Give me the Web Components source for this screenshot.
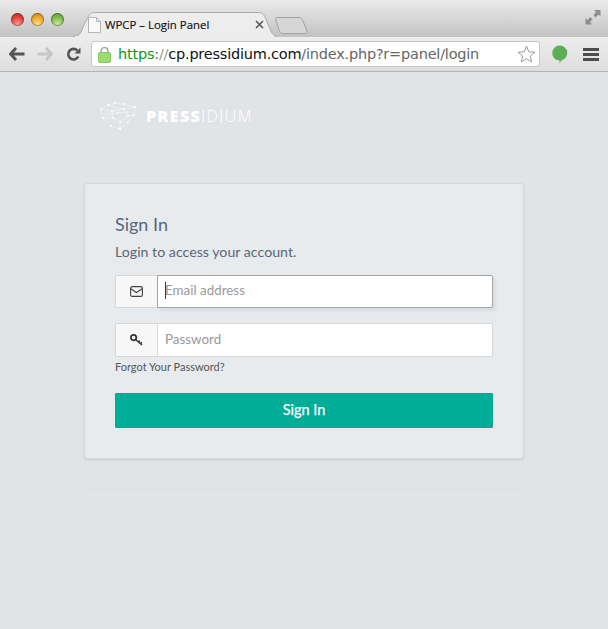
<!DOCTYPE html>
<html><head><meta charset="utf-8"><style>
html,body{margin:0;padding:0;background:#e1e4e7}
body{width:608px;height:629px;overflow:hidden}
</style></head><body>
<browser-chrome></browser-chrome>
<login-page></login-page>
<script>
function el(name,html){customElements.define(name,class extends HTMLElement{constructor(){super();this.attachShadow({mode:'open'}).innerHTML=html}})}
el('traffic-lights',`<style>:host{display:flex;gap:7px;padding:13px 0 0 11px}
i{display:block;width:13px;height:13px;border-radius:50%;box-shadow:inset 0 0 0 1px rgba(70,50,40,.45)}
.r{background:radial-gradient(circle at 50% 85%,#ff9a92,#e0403a 55%,#a82a28)}
.y{background:radial-gradient(circle at 50% 85%,#ffdf80,#eda52c 55%,#b57a20)}
.g{background:radial-gradient(circle at 50% 85%,#c6ee90,#79bb4c 55%,#55903a)}</style><i class="r"></i><i class="y"></i><i class="g"></i>`);
el('browser-tab',`<style>:host{display:block;position:relative;width:204px;height:37px;margin-left:9px;font:11.400px "Open Sans",sans-serif;color:#111;-webkit-text-stroke:.15px #111}
svg.s{position:absolute;left:0;top:0}
.c{position:relative;display:flex;align-items:center;height:25px;padding:12px 0 0 15px}
span{margin-left:4px;white-space:nowrap;width:150px}</style>
<svg class="s" width="204" height="37"><path d="M0 36.500C7 36 8 33 10 27L15 17C17 13 19 12.500 23 12.500H184C188 12.500 190 13 192 17L197 29C199 34 201 36 204 36.500" fill="#ededed" stroke="#ababab"/><path d="M2 37H202V36H2z" fill="#ededed"/></svg>
<div class="c"><svg width="13" height="16" viewBox="0 0 13 16"><path d="M.5.5H8.500L12.500 4.500V15.500H.5z" fill="#f9f9f9" stroke="#b5b5b5"/><path d="M8.500.5V4.500H12.500" fill="none" stroke="#b5b5b5"/></svg><span>WPCP – Login Panel</span><svg width="9" height="9" viewBox="0 0 9 9"><path d="M1 1L8 8M8 1L1 8" stroke="#555" stroke-width="1.500"/></svg></div>`);
el('new-tab',`<style>:host{display:block;margin:16px 0 0 -2px;height:18px}</style><svg width="34" height="19"><path d="M2 1.500H24C26 1.500 27 2 28 5L32 15C32.500 17 31 17.500 29 17.500H8C6 17.500 5 17 4 14L.8 4C.5 2 1 1.500 2 1.500z" fill="#d6d6d6" stroke="#a3a3a3"/></svg>`);
el('tool-bar',`<style>:host{display:flex;align-items:center;height:34px;padding-left:9px;background:linear-gradient(#ededed,#dedede);border-bottom:1px solid #b4b4b4}
svg{display:block;flex:none}
.url{display:flex;align-items:center;width:449px;height:26px;margin-left:10px;box-sizing:border-box;background:#fff;border:1px solid #c6c6c6;border-radius:3px;font:14.500px "DejaVu Sans",sans-serif;color:#666;white-space:nowrap;flex:none}
.url em{font-style:normal;color:#0a9a12}.url s{text-decoration:none;color:#666}.url b{font-weight:400;color:#111}
.url span{flex:1;margin-left:7px;letter-spacing:-.22px}</style>
<svg width="16" height="14" viewBox="0 0 16 14"><path d="M7 1L1.500 7L7 13M2 7H15.500" fill="none" stroke="#555" stroke-width="3"/></svg>
<svg style="margin-left:12px" width="16" height="14" viewBox="0 0 16 14"><path d="M9 1L14.500 7L9 13M14 7H.5" fill="none" stroke="#c6c6c6" stroke-width="3"/></svg>
<svg style="margin-left:13px" width="15" height="15" viewBox="0 0 15 15"><path d="M12.300 9.500A5.300 5.300 0 1 1 11.300 3.500" fill="none" stroke="#555" stroke-width="2.600"/><path d="M8.500 6.500H14.500V.5z" fill="#555"/></svg>
<div class="url"><svg style="margin-left:6px" width="13" height="17" viewBox="0 0 13 17"><path d="M3.200 7V4.800a3.300 3.300 0 0 1 6.600 0V7" fill="none" stroke="#a9a9a9" stroke-width="1.600"/><rect x=".5" y="6.500" width="12" height="10" rx="1.500" fill="#9bdc6f" stroke="#8fbf70"/></svg><span><em>https</em><s>:</s><s style="color:#999">//</s><b>cp.pressidium.com</b>/index.php?r=panel/login</span>
<svg style="margin-right:3px" width="19" height="18" viewBox="0 0 19 18"><path d="M9.500 1L11.800 6.800L18 7.200L13.200 11.100L14.800 17L9.500 13.700L4.200 17L5.800 11.100L1 7.200L7.200 6.800z" fill="#fff" stroke="#9a9a9a"/></svg></div>
<svg style="margin-left:12px" width="16" height="19" viewBox="0 0 16 19"><path d="M8 .5a7.500 7.500 0 0 1 1.500 14.800L7.500 18.500V15.500A7.500 7.500 0 0 1 8 .5z" fill="#5eae57"/></svg>
<svg style="margin-left:15px" width="16" height="13" viewBox="0 0 16 13"><path d="M0 1.500H16M0 6.500H16M0 11.500H16" stroke="#4c4c4c" stroke-width="2.800"/></svg>`);
el('browser-chrome',`<style>:host{display:block}
.top{display:flex;height:37px;background:linear-gradient(#ebebeb,#c2c2c2);overflow:hidden}
.exp{margin:9px 7px 0 auto}</style>
<div class="top"><traffic-lights></traffic-lights><browser-tab></browser-tab><new-tab></new-tab>
<svg class="exp" width="16" height="16" viewBox="0 0 16 16" fill="#8f8f8f"><path d="M9 1H15.500V7.500L13.500 5.500L10.500 8.500L8.500 6L11 3z"/><path d="M7 15.500H.5V9L2.500 11L5.500 8L7.500 10.500L5 13z"/></svg></div><tool-bar></tool-bar>`);
el('brand-logo',`<style>:host{display:flex;align-items:center;height:32px;color:#fff;font:700 16px "Open Sans",sans-serif;letter-spacing:1.400px}
svg{flex:none;margin-right:10px}span{font-weight:300}b{font-weight:800}</style>
<svg width="36" height="28" viewBox="0 0 36 28" stroke="#fff" stroke-opacity=".45" stroke-width=".8" fill="none"><path d="M1 7L8 3L15 1L24 2L35 5L34 13L28 20L20 27L11 24L3 16zM1 7L12 9L24 7L35 5M12 9L13 16L20 20L28 14L24 7M3 16L13 16M20 20V27M8 3L17 6L24 7M28 14L34 13M6 12L28 10"/><g fill="#fff" stroke="none" fill-opacity=".85"><circle cx="1" cy="7" r="1"/><circle cx="8" cy="3" r="1"/><circle cx="15" cy="1" r="1"/><circle cx="24" cy="2" r="1"/><circle cx="35" cy="5" r="1"/><circle cx="34" cy="13" r="1"/><circle cx="28" cy="20" r="1"/><circle cx="20" cy="27" r="1.200"/><circle cx="11" cy="24" r="1"/><circle cx="3" cy="16" r="1"/><circle cx="12" cy="9" r="1"/><circle cx="24" cy="7" r="1"/><circle cx="13" cy="16" r="1"/><circle cx="20" cy="20" r="1"/><circle cx="28" cy="14" r="1"/><circle cx="18" cy="11" r="1"/></g></svg><b>PRESS</b><span>IDIUM</span>`);
el('input-group',`<style>:host{display:flex;height:34px;box-sizing:border-box;font:13.400px Lato,sans-serif}
.ic{display:flex;align-items:center;justify-content:center;flex:none;width:42px;box-sizing:border-box;background:#f7f7f7;border:1px solid #d6d6d6;border-right:0;border-radius:2px 0 0 2px}
.f{flex:1;display:flex;align-items:center;padding:0 0 3px 7px;background:#fff;border:1px solid #d6d6d6;border-radius:0 2px 2px 0;color:#9a9a9a}
:host([focus]){height:33px}
:host([focus]) .f{border-color:#a3a3a3;box-shadow:3px 3px 3px rgba(0,0,0,.06)}
:host([focus]) .f::before{content:"";width:1px;height:17px;background:#333;margin-right:-1px}</style>
<div class="ic"><slot></slot></div><div class="f"><slot name="ph"></slot></div>`);
el('login-card',`<style>:host{display:block;box-sizing:border-box;width:440px;height:276px;padding:29px 30px;background:#e8ebee;border:1px solid #d3d6da;border-radius:3px;box-shadow:0 1px 2px rgba(0,0,0,.1);color:#5a6778;font-family:Lato,sans-serif}
h1{margin:0;font:400 18px/22px Lato,sans-serif}
p{margin:7px 0 0;font:14.200px/20px Lato,sans-serif}
.g1{margin-top:13px}.g2{margin-top:15px}
a{display:block;margin-top:2px;font:11px/16px Lato,sans-serif;color:#555}
button{display:block;width:378px;height:35px;margin-top:18px;padding:0 0 3px;border:0;border-radius:2px;background:#00ae98;box-shadow:inset 0 0 0 1px #0aa693;color:#fff;font:400 14.500px Lato,sans-serif;-webkit-text-stroke:.25px #fff}
svg{display:block}</style>
<h1>Sign In</h1><p>Login to access your account.</p>
<input-group class="g1" focus><svg width="13" height="11" viewBox="0 0 13 11" fill="none" stroke="#444" stroke-width="1.100"><rect x=".6" y=".6" width="11.800" height="9.800" rx="1.500"/><path d="M.8 2.800L6.500 6.500L12.200 2.800"/></svg><span slot="ph">Email address</span></input-group>
<input-group class="g2"><svg width="13" height="12" viewBox="0 0 13 12" fill="none" stroke="#333"><circle cx="3.600" cy="3.600" r="2.700" stroke-width="1.700"/><path d="M5.500 5.500L12 11M8.500 8L9.800 6.600M10.500 9.700L11.800 8.300" stroke-width="1.500"/></svg><span slot="ph">Password</span></input-group>
<a>Forgot Your Password?</a><button>Sign In</button>`);
el('login-page',`<style>:host{display:block;padding:28px 84px 0}
brand-logo{margin-left:16px}
login-card{margin-top:51px}
hr{height:1px;margin:30px 0 0;border:0;background:#dcdfe3}</style>
<brand-logo></brand-logo><login-card></login-card><hr>`);
</script>
</body></html>
